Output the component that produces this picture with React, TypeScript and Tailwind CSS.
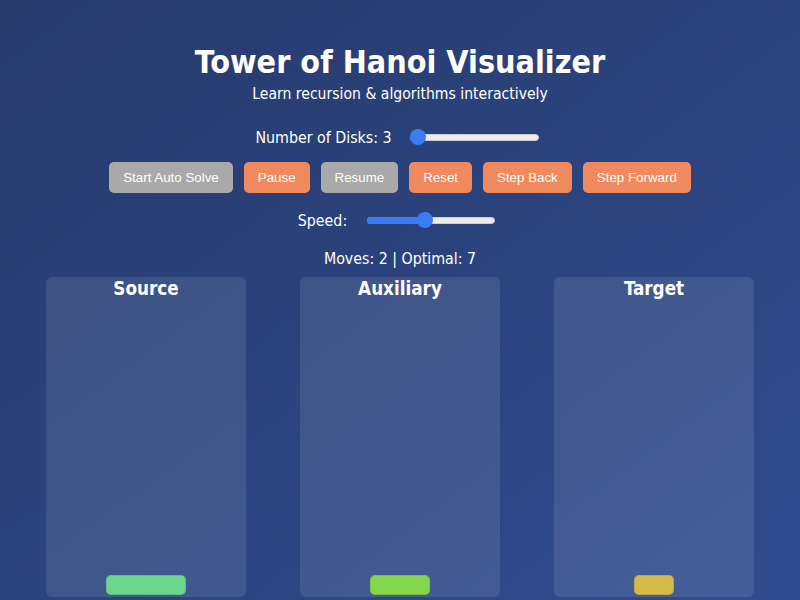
import React from "react";

function Slider({ width, frac }: { width: number; frac: number }) {
  const thumb = 16;
  const left = (width - thumb) * frac;
  return (
    <div className="relative h-[16px]" style={{ width }}>
      <div className="absolute left-0 right-0 top-[4.5px] h-[7px] rounded-full bg-[#ececec] border border-[#cfcfcf]" />
      <div
        className="absolute left-0 top-[4.5px] h-[7px] rounded-full bg-[#3b7cf3]"
        style={{ width: left + thumb / 2 }}
      />
      <div
        className="absolute top-0 h-[16px] w-[16px] rounded-full bg-[#3b7cf3]"
        style={{ left }}
      />
    </div>
  );
}

function Btn({ label, gray, extra = "" }: { label: string; gray?: boolean; extra?: string }) {
  return (
    <button
      className={
        "h-[31px] px-[14px] rounded-[5px] text-white text-[13.33px] leading-[15px] " +
        (gray ? "bg-[#a9a9a9] " : "bg-[#f0895e] ") +
        extra
      }
      style={{ fontFamily: '"Liberation Sans", Arial, sans-serif' }}
    >
      {label}
    </button>
  );
}

function Tower({ name, disk, w }: { name: string; disk: string; w: number }) {
  return (
    <div className="w-[200px] h-[320px] rounded-[6px] bg-white/10 flex flex-col items-center">
      <h3 className="text-[18.72px] leading-[24px] font-bold">{name}</h3>
      <div className="flex-1" />
      <div
        className={"h-[20px] rounded-[5px] border border-black/10 mb-[2px] " + disk}
        style={{ width: w }}
      />
    </div>
  );
}

export default function App() {
  return (
    <div
      className="min-h-screen w-full bg-gradient-to-br from-[#263a6c] to-[#304c8f] text-white text-center overflow-hidden"
      style={{ fontFamily: '"DejaVu Sans Condensed", "DejaVu Sans", sans-serif' }}
    >
      <div className="pt-[43px] flex flex-col items-center">
        <h1 className="text-[32px] leading-[38px] font-bold">Tower of Hanoi Visualizer</h1>
        <p className="mt-[4px] text-[15.6px] leading-[19px]">Learn recursion &amp; algorithms interactively</p>

        <div className="mt-[23px] pr-[6px] flex items-center justify-center gap-[18px] h-[20px]">
          <span className="text-[15.8px] leading-[19px]">Number of Disks: 3</span>
          <Slider width={129} frac={0} />
        </div>

        <div className="mt-[15px] flex items-center justify-center gap-[11px]">
          <Btn label="Start Auto Solve" gray />
          <Btn label="Pause" />
          <Btn label="Resume" gray />
          <Btn label="Reset" />
          <Btn label="Step Back" />
          <Btn label="Step Forward" />
        </div>

        <div className="mt-[17px] pr-[7px] flex items-center justify-center gap-[20px] h-[20px]">
          <span className="text-[15.8px] leading-[19px]">Speed:</span>
          <Slider width={128} frac={0.446} />
        </div>

        <div className="mt-[19px] text-[15.8px] leading-[19px]">Moves: 2 | Optimal: 7</div>

        <div className="mt-[9px] flex justify-center gap-[54px]">
          <Tower name="Source" disk="bg-[#6ad68a]" w={80} />
          <Tower name="Auxiliary" disk="bg-[#84d64b]" w={60} />
          <Tower name="Target" disk="bg-[#d3bb48]" w={40} />
        </div>
      </div>
    </div>
  );
}
